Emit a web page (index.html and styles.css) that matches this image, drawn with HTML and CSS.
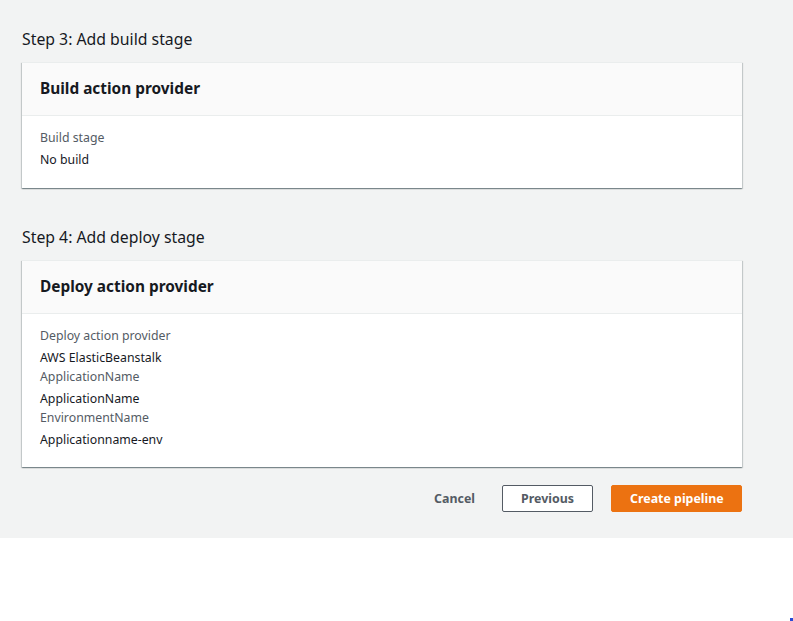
FILE: index.html
```html
<!DOCTYPE html>
<html>
<head>
<meta charset="utf-8">
<link rel="stylesheet" href="styles.css">
</head>
<body>
<div class="page">
  <section class="step">
    <h2 class="step-title">Step 3: Add build stage</h2>
    <div class="card">
      <div class="card-header"><h3>Build action provider</h3></div>
      <div class="card-body">
        <div class="label">Build stage</div>
        <div class="value">No build</div>
      </div>
    </div>
  </section>
  <section class="step step-second">
    <h2 class="step-title">Step 4: Add deploy stage</h2>
    <div class="card">
      <div class="card-header"><h3>Deploy action provider</h3></div>
      <div class="card-body card-body-tight">
        <div class="label">Deploy action provider</div>
        <div class="value">AWS ElasticBeanstalk</div>
        <div class="label">ApplicationName</div>
        <div class="value">ApplicationName</div>
        <div class="label">EnvironmentName</div>
        <div class="value">Applicationname-env</div>
      </div>
    </div>
  </section>
  <div class="actions">
    <button class="btn btn-link">Cancel</button>
    <button class="btn btn-normal">Previous</button>
    <button class="btn btn-primary">Create pipeline</button>
  </div>
</div>
<div class="dot"></div>
</body>
</html>
```
FILE: styles.css
```css
html, body {
  margin: 0;
  padding: 0;
  background: #ffffff;
  font-family: "Noto Sans", "Open Sans", sans-serif;
  color: #16191f;
}
.page {
  background: #f2f3f3;
  width: 793px;
  box-sizing: border-box;
  padding: 27px 51px 26px 22px;
}
.step-title {
  margin: 0 0 11px 0;
  font-size: 15.8px;
  line-height: 24px;
  font-weight: 400;
  color: #16191f;
}
.step-second {
  margin-top: 37px;
}
.card {
  background: #ffffff;
  border-top: 1px solid #eaeded;
  box-shadow: 0 1px 1px 0 rgba(0, 28, 36, 0.3), 1px 1px 1px 0 rgba(0, 28, 36, 0.15), -1px 1px 1px 0 rgba(0, 28, 36, 0.15);
}
.card-header {
  background: #fafafa;
  border-bottom: 1px solid #eaeded;
  padding: 15px 18px 16px 18px;
  height: 21px;
}
.card-header h3 {
  margin: 0;
  font-size: 15.4px;
  line-height: 21px;
  font-weight: 700;
  color: #16191f;
}
.card-body {
  padding: 13px 18px 18px 18px;
  font-size: 12.3px;
}
.card-body-tight {
  padding-bottom: 17px;
}
.label {
  height: 18px;
  line-height: 18px;
  color: #545b64;
}
.value {
  height: 20px;
  line-height: 20px;
  margin-top: 3px;
  color: #16191f;
}
.actions {
  margin-top: 18px;
  display: flex;
  justify-content: flex-end;
  align-items: center;
}
.btn {
  font-family: "Noto Sans", "Open Sans", sans-serif;
  font-size: 12.4px;
  font-weight: 700;
  line-height: 19px;
  height: 27px;
  padding: 3px 18px;
  border-radius: 2px;
  border: 1px solid transparent;
  background: transparent;
  color: #545b64;
  white-space: nowrap;
}
.btn-link {
  margin-right: 8px;
}
.btn-normal {
  background: #ffffff;
  border-color: #545b64;
  margin-right: 18px;
  width: 91px;
}
.btn-primary {
  background: #ec7211;
  border-color: #ec7211;
  color: #ffffff;
  width: 131px;
}
.dot {
  position: absolute;
  left: 790px;
  top: 618px;
  width: 3px;
  height: 3px;
  background: #2a4bd7;
}
```
